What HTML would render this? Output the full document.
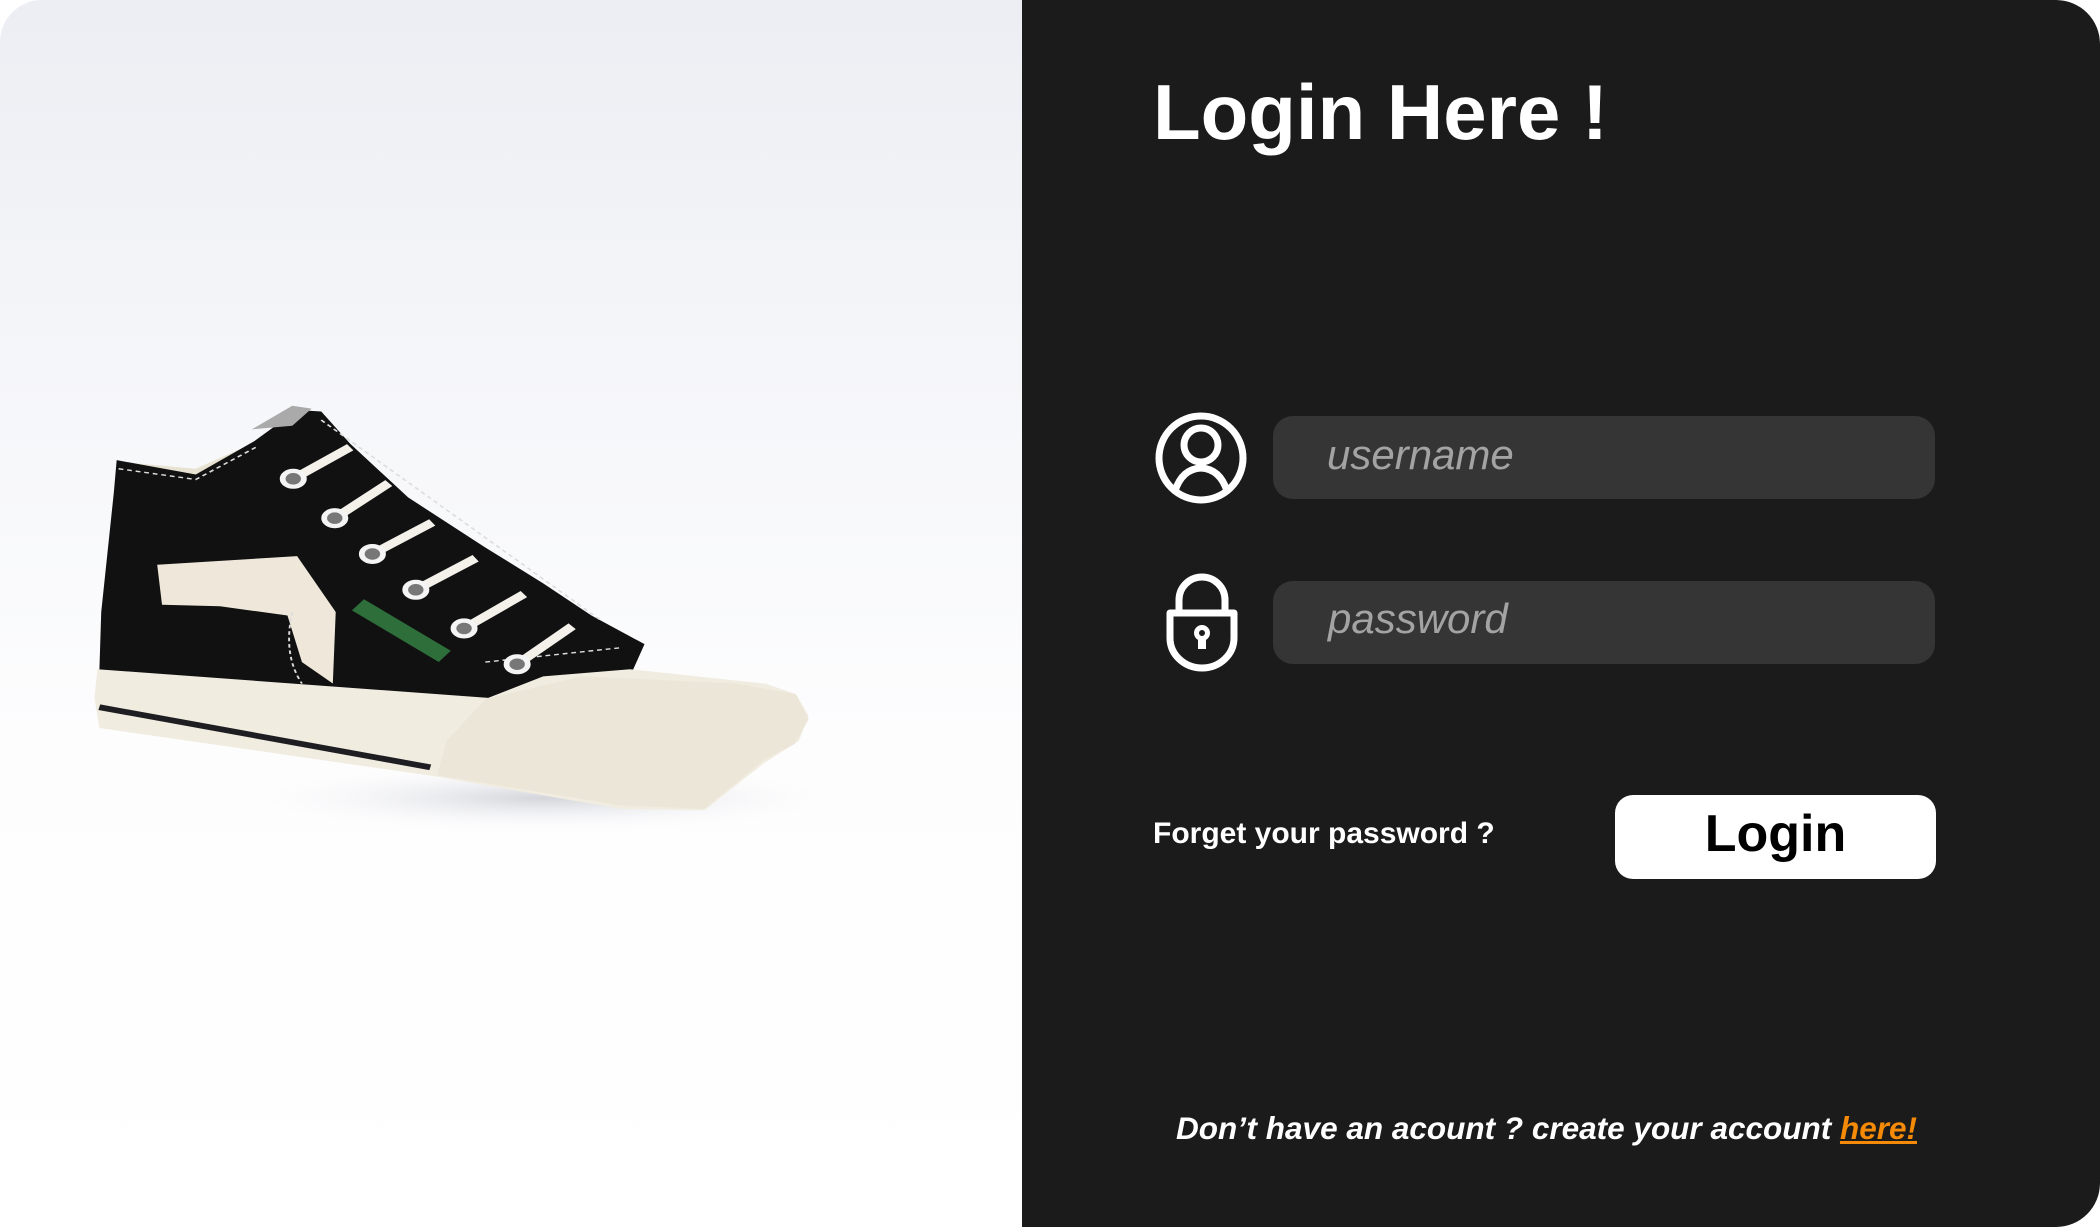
<!DOCTYPE html>
<html><head><meta charset="utf-8"><style>
*{margin:0;padding:0;box-sizing:border-box}
html,body{width:2100px;height:1227px;background:#fff;overflow:hidden}
.wrap{position:absolute;left:0;top:0;width:2100px;height:1227px;border-radius:42px;overflow:hidden;background:#fff}
.left{position:absolute;left:0;top:0;width:1022px;height:1227px;background:linear-gradient(180deg,#eceef3 0%,#f5f6f9 30%,#fdfdfe 60%,#fff 100%)}
.right{position:absolute;left:1022px;top:0;width:1078px;height:1227px;background:#1b1b1b;border-radius:0 44px 44px 0}
.t{position:absolute;font-family:"Liberation Sans",sans-serif;white-space:nowrap;line-height:1}
.inp{position:absolute;left:1273px;width:662px;height:83px;background:#353535;border-radius:20px}
</style></head><body><div class="wrap">
<div class="left">
<svg width="1022" height="1227" viewBox="0 0 1022 1227">
<defs><radialGradient id="sh" cx="0.5" cy="0.5" r="0.5"><stop offset="0" stop-color="#c9cbd2" stop-opacity=".8"/><stop offset="1" stop-color="#fff" stop-opacity="0"/></radialGradient></defs>
<g transform="translate(80,390) scale(0.965,0.716) translate(-80,-390)">
<ellipse cx="560" cy="960" rx="330" ry="50" fill="url(#sh)"/>
<path d="M118 490 L200 500 L250 470 L270 520 L210 535 L120 530Z" fill="#e8e2d2"/>
<path d="M115 534 L118 488 L200 508 L260 462 L305 418 L330 420 L360 465 L420 540 L500 610 L560 660 L610 705 L665 745 L650 790 L560 800 L503 823 L100 785 L102 700Z" fill="#111"/>
<path d="M258 445 L300 412 L320 416 L300 440Z" fill="#aaa"/>
<path d="M98 780 L503 820 L560 790 L650 780 L790 800 L822 815 L835 845 L825 880 L790 910 L727 977 L640 975 L450 930 L100 862 L95 820Z" fill="#f1ece0"/>
<path d="M500 822 L600 790 L760 800 L822 815 L835 850 L820 885 L790 905 L727 975 L640 970 L450 928 L460 880 Z" fill="#ece6d8"/>
<path d="M100 833 L443 917" stroke="#1e1e22" stroke-width="8"/>
<path d="M160 634 L305 622 L345 700 L342 800 L310 770 L295 705 L225 692 L165 690Z" fill="#efe8da"/>
<path d="M120 500 L200 515 L265 468 M330 432 L620 712 M300 700 Q290 760 310 800 M500 770 L640 750" stroke="#ddd" stroke-width="2" stroke-dasharray="5 4" fill="none"/>
<path d="M368 690 L458 762" stroke="#2e6e3a" stroke-width="20"/>
<g stroke="#f4f1ea" stroke-width="11" fill="none">
<path d="M301 514 L360 470 M344 569 L400 520 M383 619 L445 575 M428 669 L490 625 M478 723 L540 675 M533 773 L590 720"/>
</g>
<g fill="#777" stroke="#f4f4f4" stroke-width="6">
<circle cx="301" cy="514" r="11"/><circle cx="344" cy="569" r="11"/><circle cx="383" cy="619" r="11"/><circle cx="428" cy="669" r="11"/><circle cx="478" cy="723" r="11"/><circle cx="533" cy="773" r="11"/>
</g>
</g>
</svg>
</div>
<div class="right"></div>
<div class="t" style="left:1153px;top:73px;font-size:78px;font-weight:bold;color:#fff">Login Here !</div>
<svg style="position:absolute;left:1150px;top:405px" width="110" height="110" viewBox="0 0 110 110">
<circle cx="51" cy="53" r="42" stroke="#fff" stroke-width="7" fill="none"/>
<circle cx="51" cy="40" r="17" stroke="#fff" stroke-width="7" fill="none"/>
<path d="M25 86 Q32 64 51 63 Q70 64 77 86" stroke="#fff" stroke-width="7" fill="none"/>
</svg>
<svg style="position:absolute;left:1160px;top:570px" width="85" height="105" viewBox="0 0 85 105">
<path d="M19 43 V30 A23 23 0 0 1 65 30 V43" stroke="#fff" stroke-width="7" fill="none"/>
<path d="M10 43 H74 V68 A32 30 0 0 1 10 68Z" stroke="#fff" stroke-width="7" fill="none" stroke-linejoin="round"/>
<circle cx="42" cy="63" r="8" fill="#fff"/><rect x="38" y="63" width="8" height="16" fill="#fff"/>
<circle cx="42" cy="63" r="3" fill="#1b1b1b"/>
</svg>
<div class="inp" style="top:416px"></div>
<div class="t" style="left:1327px;top:434px;font-size:42px;font-style:italic;color:#a3a3a3">username</div>
<div class="inp" style="top:581px"></div>
<div class="t" style="left:1328px;top:598px;font-size:42px;font-style:italic;color:#a3a3a3">password</div>
<div class="t" style="left:1153px;top:819px;font-size:30px;font-weight:bold;color:#fff">Forget your password ?</div>
<div style="position:absolute;left:1615px;top:795px;width:321px;height:84px;background:#fff;border-radius:18px"></div>
<div class="t" style="left:1615px;top:808px;width:321px;text-align:center;font-size:52px;font-weight:bold;color:#000">Login</div>
<div class="t" style="left:1176px;top:1113px;font-size:31.5px;font-weight:bold;font-style:italic;color:#fff">Don’t have an acount ? create your account <span style="color:#f58a07;text-decoration:underline">here!</span></div>
</div></body></html>
